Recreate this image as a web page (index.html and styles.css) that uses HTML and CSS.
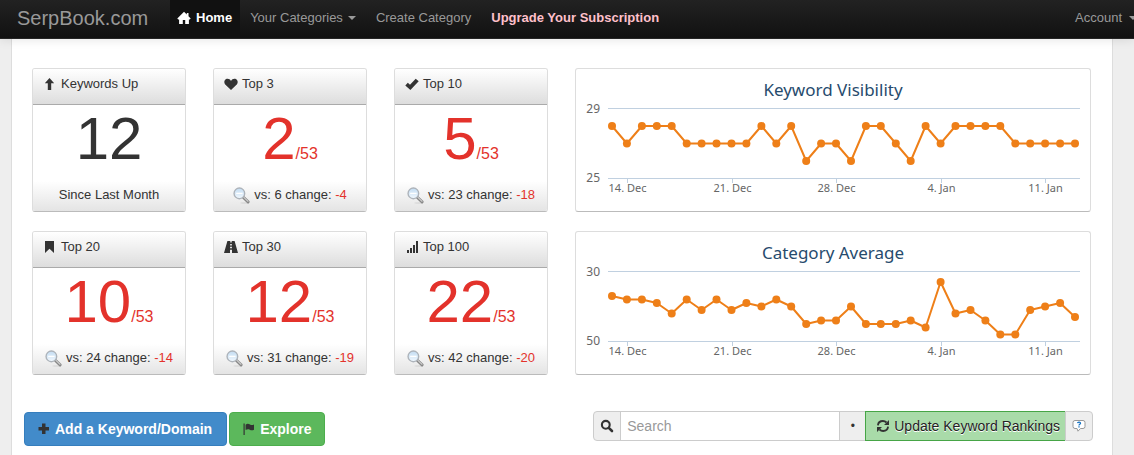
FILE: index.html
```html
<!DOCTYPE html>
<html lang="en">
<head>
    <meta charset="UTF-8">
    <meta name="viewport" content="width=device-width, initial-scale=1">
    <title>SerpBook.com</title>
    <link rel="stylesheet" href="styles.css">
</head>
<body>

<svg class="sprite" aria-hidden="true">
    <defs>
        <linearGradient id="lens" x1="0" y1="0" x2="0" y2="1">
            <stop offset="0" stop-color="#c3dcf2"/>
            <stop offset="1" stop-color="#f1f8fe"/>
        </linearGradient>
    </defs>
    <symbol id="magnifier" viewBox="0 0 16 16">
        <ellipse cx="11" cy="15" rx="4" ry="1" fill="#ddd"/>
        <path d="M9.8 9.8l4.4 4.2" stroke="#888" stroke-width="2.8" stroke-linecap="round"/>
        <path d="M10.3 9.8l3.8 3.6" stroke="#ccc" stroke-width="1.1" stroke-linecap="round"/>
        <circle cx="6" cy="6" r="5" fill="url(#lens)" stroke="#adb3ba" stroke-width="1.3"/>
        <path d="M3 6h6" stroke="#fff" stroke-width="1.2"/>
    </symbol>
</svg>

<nav class="navbar">
    <a class="brand" href="#">SerpBook.com</a>
    <a class="nav-link active" href="#">
        <svg class="icon" viewBox="0 0 14 14"><path d="M7 .8L.3 7.5l.9.9h.9V13h3.7V9h2.4v4h3.7V8.4h.9l.9-.9-2.2-2.2V1.9H9.8v1.7z"/></svg>
        Home
    </a>
    <a class="nav-link" href="#">Your Categories <span class="caret"></span></a>
    <a class="nav-link" href="#">Create Category</a>
    <a class="nav-link upgrade" href="#">Upgrade Your Subscription</a>
    <a class="nav-link account" href="#">Account <span class="caret"></span></a>
</nav>

<main class="page">
    <div class="dashboard">
        <section class="card">
            <h2 class="card-header">
                <svg class="icon" viewBox="0 0 14 14"><path d="M6.5 1L1.8 6.3h3V13h3.4V6.3h3z"/></svg>
                Keywords Up
            </h2>
            <div class="number neutral">12</div>
            <div class="card-footer">Since Last Month</div>
        </section>

        <section class="card">
            <h2 class="card-header">
                <svg class="icon" viewBox="0 0 14 14"><path d="M7 13L1.2 7.4C-.3 5.8.2 3.3 1.8 2.3 3.6 1.3 6 2 7 4c1-2 3.4-2.7 5.2-1.7 1.6 1 2.1 3.5.6 5.1z"/></svg>
                Top 3
            </h2>
            <div class="number">2<small>/53</small></div>
            <div class="card-footer"><svg class="magnifier"><use href="#magnifier"/></svg><span>vs: 6 change: <span class="down">-4</span></span></div>
        </section>

        <section class="card">
            <h2 class="card-header">
                <svg class="icon" viewBox="0 0 14 14"><path d="M.3 8.400l2.500-2.600 2.200 1.900 5.700-5.900 3 2.500L5.400 13z"/></svg>
                Top 10
            </h2>
            <div class="number">5<small>/53</small></div>
            <div class="card-footer"><svg class="magnifier"><use href="#magnifier"/></svg><span>vs: 23 change: <span class="down">-18</span></span></div>
        </section>

        <section class="card chart-card">
            <svg class="chart" id="visibility" viewBox="0 0 514 142" role="img" aria-label="Keyword Visibility"></svg>
        </section>

        <section class="card">
            <h2 class="card-header">
                <svg class="icon" viewBox="0 0 14 14"><path d="M2 1h9v12L6.500 8.800 2 13z"/></svg>
                Top 20
            </h2>
            <div class="number">10<small>/53</small></div>
            <div class="card-footer"><svg class="magnifier"><use href="#magnifier"/></svg><span>vs: 24 change: <span class="down">-14</span></span></div>
        </section>

        <section class="card">
            <h2 class="card-header">
                <svg class="icon" viewBox="0 0 14 14"><path fill-rule="evenodd" d="M3.400 1h2.900v1.500h1.400V1h2.900L14 13H8V9.800H6V13H0zM6.200 4v1.400h1.600V4zM6.100 6.800v1.500h1.800V6.800z"/></svg>
                Top 30
            </h2>
            <div class="number">12<small>/53</small></div>
            <div class="card-footer"><svg class="magnifier"><use href="#magnifier"/></svg><span>vs: 31 change: <span class="down">-19</span></span></div>
        </section>

        <section class="card">
            <h2 class="card-header">
                <svg class="icon" viewBox="0 0 14 14"><path d="M2 10h2v3H2zM5 8h2v5H5zM8 5h2v8H8zM11 1h2v12h-2z"/></svg>
                Top 100
            </h2>
            <div class="number">22<small>/53</small></div>
            <div class="card-footer"><svg class="magnifier"><use href="#magnifier"/></svg><span>vs: 42 change: <span class="down">-20</span></span></div>
        </section>

        <section class="card chart-card">
            <svg class="chart" id="average" viewBox="0 0 514 142" role="img" aria-label="Category Average"></svg>
        </section>
    </div>

    <div class="toolbar">
        <div class="actions">
            <button class="btn btn-primary" type="button">
                <svg class="icon" viewBox="0 0 14 14"><path d="M5 1.500h3.500V5H12v3.500H8.500V12H5V8.500H1.500V5H5z"/></svg>
                Add a Keyword/Domain
            </button>
            <button class="btn btn-success" type="button">
                <svg class="icon" viewBox="0 0 14 14"><path d="M1.500 1.500h1.200V13H1.500zM3.600 2.700C5 1.500 6.500 1.500 8 2.500c1.400.8 2.500.6 4 0v5.200c-1.500.8-3 .8-4.200 0-1.500-.8-2.800-.5-4.200.3z"/></svg>
                Explore
            </button>
        </div>
        <form class="search-group">
            <label class="addon" for="search" aria-label="Search">
                <svg class="icon" viewBox="0 0 14 14"><circle cx="5.800" cy="5.800" r="3.900" fill="none" stroke="#333" stroke-width="2.100"/><path d="M8.800 8.800l3.200 3.200" stroke="#333" stroke-width="2.600" stroke-linecap="round"/></svg>
            </label>
            <input class="search-input" id="search" type="text" placeholder="Search">
            <span class="addon dot-addon">&bull;</span>
            <button class="update" type="button">
                <svg class="icon" viewBox="0 0 14 14"><path d="M1.900 6.300C2.200 3.700 4.200 2 6.900 2c1.500 0 2.700.6 3.600 1.500M12.100 7.700C11.800 10.300 9.800 12 7.100 12c-1.500 0-2.700-.6-3.600-1.500" fill="none" stroke="#333" stroke-width="1.800"/><path d="M13 1v5H8zM1 13V8h5z"/></svg>
                Update Keyword Rankings
            </button>
            <button class="addon help" type="button" aria-label="Help">
                <svg class="help-icon" viewBox="0 0 14 14"><path d="M3 1.500h8a2 2 0 0 1 2 2v4a2 2 0 0 1-2 2H8.500L6 12.200 5 9.500H3a2 2 0 0 1-2-2v-4a2 2 0 0 1 2-2z" fill="#fff" stroke="#999"/><path d="M5.500 4.200c.2-1.400 3-1.400 3 .1C8.500 5.300 7 5.200 7 6.400M7 7.300v1.200" fill="none" stroke="#1673c4" stroke-width="1.300"/></svg>
            </button>
        </form>
    </div>
</main>

<script>
    const ticks = { 1: '14. Dec', 8: '21. Dec', 15: '28. Dec', 22: '4. Jan', 29: '11. Jan' };

    // top and bottom are the axis values on the two grid lines
    function drawChart(id, title, top, bottom, data)
    {
        const step = 463 / (data.length - 1);
        const x = i => (36 + i * step).toFixed(1);
        const y = v => (39.5 + (v - top) / (bottom - top) * 70).toFixed(1);

        let out = `<text class="chart-title" x="257" y="27">${title}</text>`;
        out += `<path class="grid" d="M32 39.5H504M32 109.5H504"/>`;
        out += `<text class="y-label" x="24" y="44">${top}</text>`;
        out += `<text class="y-label" x="24" y="113">${bottom}</text>`;

        for (const i in ticks)
        {
            const tx = Math.round(x(i)) + 0.5;
            out += `<path class="grid" d="M${tx} 110v4"/>`;
            out += `<text class="x-label" x="${tx}" y="123">${ticks[i]}</text>`;
        }

        out += `<polyline class="line" points="${data.map((v, i) => x(i) + ',' + y(v)).join(' ')}"/>`;
        data.forEach((v, i) => {
            out += `<circle class="dot" cx="${x(i)}" cy="${y(v)}" r="4"/>`;
        });
        document.getElementById(id).innerHTML = out;
    }

    drawChart('visibility', 'Keyword Visibility', 29, 25,
        [28, 27, 28, 28, 28, 27, 27, 27, 27, 27, 28, 27, 28, 26, 27, 27, 26, 28, 28, 27, 26, 28, 27, 28, 28, 28, 28, 27, 27, 27, 27, 27]);
    drawChart('average', 'Category Average', 30, 50,
        [37, 38, 38, 39, 42, 38, 41, 38, 41, 39, 40, 38, 40, 45, 44, 44, 40, 45, 45, 45, 44, 46, 33, 42, 41, 44, 48, 48, 41, 40, 39, 43]);
</script>
</body>
</html>
```

FILE: styles.css
```css
* {
    box-sizing: border-box;
}

body {
    margin: 0;
    min-height: 100vh;
    display: flex;
    flex-direction: column;
    background: #eee;
    color: #333;
    font-family: "Liberation Sans", Arial, sans-serif;
    font-size: 13px;
    line-height: 20px;
    overflow-x: hidden;
}

a {
    text-decoration: none;
}

button, input {
    font-family: inherit;
}

.sprite {
    position: absolute;
    width: 0;
    height: 0;
}

.icon {
    width: 14px;
    height: 14px;
    flex: none;
    fill: #333;
}

/* navbar */
.navbar {
    position: relative;
    z-index: 1;
    display: flex;
    height: 39px;
    padding-left: 17px;
    background: linear-gradient(#222, #111);
    border-bottom: 1px solid #252525;
    box-shadow: 0 1px 10px rgba(0, 0, 0, 0.1);
    white-space: nowrap;
}

.brand {
    width: 153px;
    padding-top: 8px;
    color: #999;
    font-size: 20px;
}

.nav-link {
    display: flex;
    align-items: center;
    gap: 5px;
    padding: 0 10px;
    color: #999;
    padding-bottom: 3px;
}

.nav-link.active {
    padding-left: 7px;
    padding-right: 8px;
    background: #111;
    color: #fff;
    font-weight: bold;
}

.nav-link.active .icon {
    fill: #fff;
}

.nav-link.upgrade {
    color: #ffc0cb;
    font-weight: bold;
}

.nav-link.account {
    gap: 7px;
    margin-left: auto;
    margin-right: -13px;
}

.caret {
    border-top: 4px solid #999;
    border-left: 4px solid transparent;
    border-right: 4px solid transparent;
}

/* page */
.page {
    flex: 1;
    margin: 0 21px 0 11px;
    background: #fff;
    border: 1px solid #ddd;
    border-width: 0 1px;
}

.dashboard {
    display: grid;
    grid-template-columns: 154px 154px 154px minmax(0, 1fr);
    gap: 19px 27px;
    padding: 29px 21px 0 20px;
}

.card {
    background: #fff;
    border: 1px solid #ddd;
    border-bottom-color: #bbb;
    border-radius: 3px;
    overflow: hidden;
}

.card-header {
    display: flex;
    gap: 4px;
    margin: 0;
    padding: 5px 10px 10px;
    background: linear-gradient(#fff, #ddd);
    border-bottom: 1px solid #aaa;
    font-size: 13px;
    font-weight: normal;
}

.card-header .icon {
    margin-top: 3px;
}

.number {
    padding-top: 4px;
    color: #e3322b;
    font-size: 60px;
    line-height: 60px;
    text-align: center;
}

.number.neutral {
    color: #333;
}

.number small {
    font-size: 16px;
    line-height: 16px;
}

.card-footer {
    display: flex;
    justify-content: center;
    gap: 4px;
    margin-top: 12px;
    padding: 4px 0 6px;
    background: linear-gradient(#fff, #e4e4e4);
    white-space: nowrap;
}

.magnifier {
    width: 17px;
    height: 17px;
    margin-top: 2px;
    fill: none;
}

.down {
    color: #e3322b;
}

/* charts */
.chart {
    display: block;
    width: 100%;
    height: auto;
    font-family: "Noto Sans", sans-serif;
}

.chart-title {
    fill: #274b6d;
    font-size: 17px;
    text-anchor: middle;
}

.x-label, .y-label {
    fill: #666;
    font-size: 11px;
    text-anchor: middle;
}

.y-label {
    font-size: 12px;
    text-anchor: end;
}

.grid {
    stroke: #c0d0e0;
    fill: none;
}

.line {
    fill: none;
    stroke: #ee7f18;
    stroke-width: 2;
    stroke-linejoin: round;
}

.dot {
    fill: #ee7f18;
}

/* toolbar */
.toolbar {
    display: flex;
    justify-content: space-between;
    align-items: flex-start;
    padding: 36px 19px 0 12px;
}

.actions {
    display: flex;
    gap: 2px;
    padding-top: 1px;
}

.btn {
    display: flex;
    align-items: center;
    gap: 4px;
    height: 34px;
    padding: 0 12px;
    border: 1px solid;
    border-radius: 4px;
    color: #fff;
    font-size: 14px;
    font-weight: bold;
    white-space: nowrap;
}

.btn-primary {
    padding-right: 14px;
    background: #428bca;
    border-color: #357ebd;
}

.btn-success {
    background: #5cb85c;
    border-color: #4cae4c;
}

.search-group {
    display: flex;
    height: 30px;
    font-size: 14px;
}

.addon {
    display: flex;
    align-items: center;
    justify-content: center;
    width: 28px;
    padding: 0;
    background: #eee;
    border: 1px solid #ccc;
    border-radius: 0;
}

.addon:first-child {
    border-radius: 4px 0 0 4px;
}

.search-input {
    width: 220px;
    margin: 0 -1px;
    padding: 4px 6px;
    border: 1px solid #ccc;
    border-radius: 0;
    font-size: 14px;
}

.search-input::placeholder {
    color: #999;
}

.dot-addon {
    width: 26px;
    border-right: 0;
    font-size: 12px;
}

.update {
    display: flex;
    align-items: center;
    gap: 4px;
    padding: 0 5px 0 10px;
    background: #a9dba9;
    border: 1px solid #46a546;
    border-right: 0;
    color: #222;
    font-size: 14px;
    text-shadow: 0 1px 0 #fff;
    white-space: nowrap;
}

.help {
    border-radius: 0 4px 4px 0;
}

.help-icon {
    width: 14px;
    height: 14px;
}
```
